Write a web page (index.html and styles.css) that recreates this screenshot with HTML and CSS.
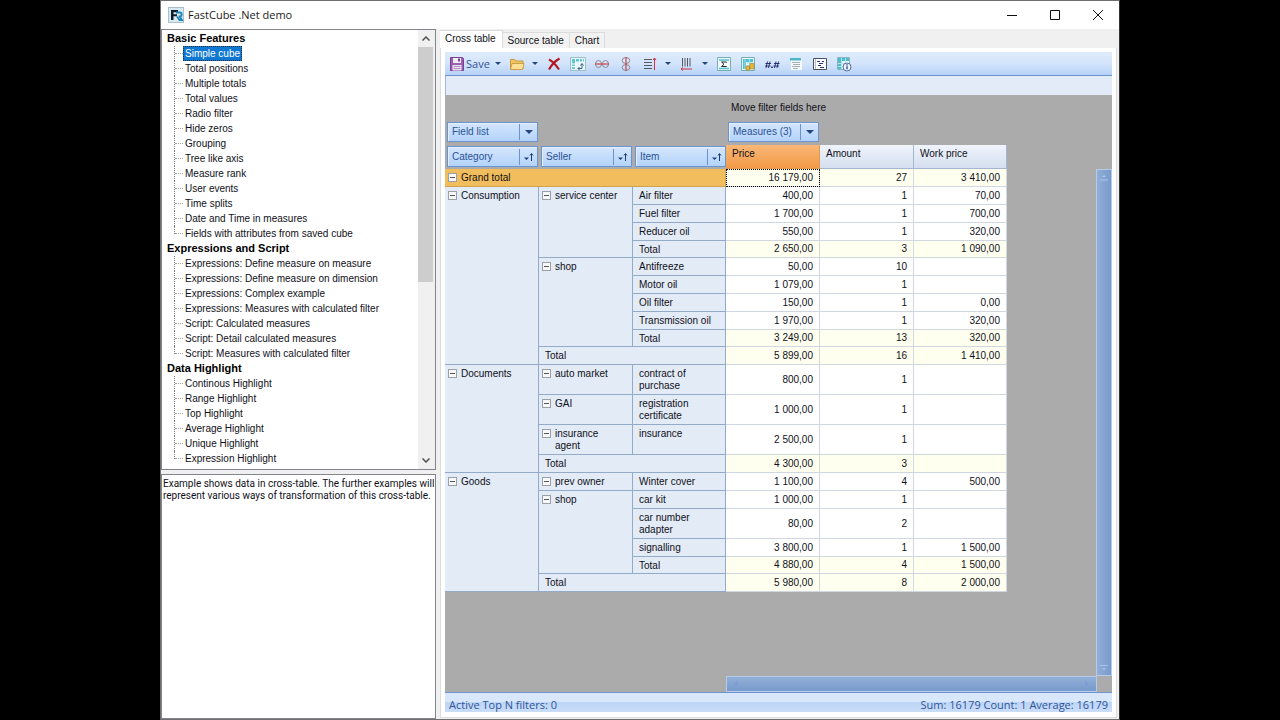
FILE: index.html
```html
<!DOCTYPE html>
<html lang="en">
<head>
<meta charset="utf-8">
<title>FastCube .Net demo</title>
<link rel="stylesheet" href="styles.css">
</head>
<body>
<div class="window">
  <header class="titlebar">
    <svg class="app-icon" viewBox="0 0 16 16"><rect x=".5" y=".5" width="15" height="15" fill="#d9e9f2" stroke="#a9bfcc"/><path d="M3 13V3h7v2.300H5.500v2H9v2H5.500V13z" fill="#101c28"/><path d="M8 5.500h3.500a2 2 0 0 1 .3 4L14 13h-2.500L9 9.500" fill="none" stroke="#1c84b8" stroke-width="1.800"/></svg>
    <h1 class="title">FastCube .Net demo</h1>
    <button class="win-btn" aria-label="Minimize"><svg viewBox="0 0 10 10"><path d="M0 5.500h10"/></svg></button>
    <button class="win-btn" aria-label="Maximize"><svg viewBox="0 0 10 10"><path d="M.5.5h9v9h-9z"/></svg></button>
    <button class="win-btn" aria-label="Close"><svg viewBox="0 0 10 10"><path d="M0 0l10 10M10 0L0 10"/></svg></button>
  </header>
  <div class="content">
    <aside class="side">
      <nav class="tree">
        <ul class="groups">
          <li><span class="group">Basic Features</span>
            <ul class="items">
              <li><a class="selected" href="#">Simple cube</a></li>
              <li><a href="#">Total positions</a></li>
              <li><a href="#">Multiple totals</a></li>
              <li><a href="#">Total values</a></li>
              <li><a href="#">Radio filter</a></li>
              <li><a href="#">Hide zeros</a></li>
              <li><a href="#">Grouping</a></li>
              <li><a href="#">Tree like axis</a></li>
              <li><a href="#">Measure rank</a></li>
              <li><a href="#">User events</a></li>
              <li><a href="#">Time splits</a></li>
              <li><a href="#">Date and Time in measures</a></li>
              <li><a href="#">Fields with attributes from saved cube</a></li>
            </ul>
          </li>
          <li><span class="group">Expressions and Script</span>
            <ul class="items">
              <li><a href="#">Expressions: Define measure on measure</a></li>
              <li><a href="#">Expressions: Define measure on dimension</a></li>
              <li><a href="#">Expressions: Complex example</a></li>
              <li><a href="#">Expressions: Measures with calculated filter</a></li>
              <li><a href="#">Script: Calculated measures</a></li>
              <li><a href="#">Script: Detail calculated measures</a></li>
              <li><a href="#">Script: Measures with calculated filter</a></li>
            </ul>
          </li>
          <li><span class="group">Data Highlight</span>
            <ul class="items">
              <li><a href="#">Continous Highlight</a></li>
              <li><a href="#">Range Highlight</a></li>
              <li><a href="#">Top Highlight</a></li>
              <li><a href="#">Average Highlight</a></li>
              <li><a href="#">Unique Highlight</a></li>
              <li><a href="#">Expression Highlight</a></li>
            </ul>
          </li>
        </ul>
        <div class="scroll">
          <button class="scroll-btn" aria-label="Scroll up"><svg viewBox="0 0 8 5"><path d="M.5 4.500L4 1l3.500 3.500"/></svg></button>
          <div class="scroll-track"><div class="scroll-thumb"></div></div>
          <button class="scroll-btn" aria-label="Scroll down"><svg viewBox="0 0 8 5"><path d="M.5.5L4 4 7.500.5"/></svg></button>
        </div>
      </nav>
      <p class="description">Example shows data in cross-table. The further examples will represent various ways of transformation of this cross-table.</p>
    </aside>
    <main class="main">
      <div class="tabs" role="tablist">
        <button class="tab active" role="tab" aria-selected="true">Cross table</button>
        <button class="tab" role="tab">Source table</button>
        <button class="tab" role="tab">Chart</button>
      </div>
      <section class="page">
        <div class="toolbar">
          <button class="tool save"><svg viewBox="0 0 16 16"><path d="M1.500 1.500h12l1 1v12h-13z" fill="#9a5fb0" stroke="#7a4192"/><path d="M4 2h8v5H4z" fill="#f4eef8"/><path d="M9 2.500h2v3H9z" fill="#7a4192"/><path d="M3.500 9h9v5.500h-9z" fill="#efe6f4"/><path d="M4.500 10.500h7M4.500 12.500h7" stroke="#b48cc4"/></svg>Save</button>
          <button class="drop" aria-label="Save options"></button>
          <button class="tool" aria-label="Open"><svg viewBox="0 0 16 16"><path d="M1.500 13V3.500h4l1.500 1.500h7v8z" fill="#f0c463" stroke="#c89a3c"/><path d="M1.500 13.500l1.500-6h12l-1.500 6z" fill="#ffe096" stroke="#cda047"/></svg></button>
          <button class="drop" aria-label="Open options"></button>
          <button class="tool" aria-label="Clear"><svg viewBox="0 0 16 16"><path d="M3 3.500c4 2 7 5.500 10 10M13.500 2.500C9 5 5.500 9 3 13.500" fill="none" stroke="#b3181f" stroke-width="2.200"/></svg></button>
          <button class="tool" aria-label="Transpose"><svg viewBox="0 0 16 16"><path d="M.5 1.500h15v13H.5z" fill="#eaf7fa" stroke="#9cbfca"/><path d="M2 3h12v2.500H2zM2 5.500h3V13H2z" fill="#5cc8d8"/><path d="M5.500 3v10M9.500 3v3M12.500 3v3M2 8h4M2 10.500h4" stroke="#fff"/><path d="M8 12.500h4V8M10.500 9.500L12 7.500l1.500 2M9.500 11L8 12.500 9.500 14" fill="none" stroke="#37618a"/></svg></button>
          <button class="tool" aria-label="Hide zero columns"><svg viewBox="0 0 16 16"><g fill="none" stroke="#8a8a92"><ellipse cx="4.500" cy="8" rx="3" ry="3.500"/><ellipse cx="11.500" cy="8" rx="3" ry="3.500"/></g><path d="M1 8h14" stroke="#d34b52" stroke-width="1.300"/></svg></button>
          <button class="tool" aria-label="Hide zero rows"><svg viewBox="0 0 16 16"><g fill="none" stroke="#8a8a92"><ellipse cx="8" cy="4.500" rx="3.800" ry="3"/><ellipse cx="8" cy="11.500" rx="3.800" ry="3"/></g><path d="M8 1v14" stroke="#d34b52" stroke-width="1.300"/></svg></button>
          <button class="tool" aria-label="Sort rows"><svg viewBox="0 0 16 16"><path d="M2 3.500h8M2 6.500h8M2 9.500h8M2 12.500h8" stroke="#55595f"/><path d="M12.500 2v12M11 4l1.500-2L14 4" fill="none" stroke="#cf3440"/></svg></button>
          <button class="drop" aria-label="Row sort options"></button>
          <button class="tool" aria-label="Sort columns"><svg viewBox="0 0 16 16"><path d="M3.500 2v8.500M6 2v8.500M8.500 2v8.500M11 2v8.500" stroke="#55595f"/><path d="M2 13h11M4 11.500L2 13l2 1.500" fill="none" stroke="#cf3440"/></svg></button>
          <button class="drop" aria-label="Column sort options"></button>
          <button class="tool" aria-label="Totals"><svg viewBox="0 0 16 16"><path d="M1.500 1.500h13v13h-13z" fill="#eef8f6" stroke="#78aeb6"/><path d="M3 4h10M3 12.500h10" stroke="#52c4d2" stroke-width="1.500"/><path d="M4.500 5.500h7v5.500h-7z" fill="#fff"/><path d="M10.500 6.500V6h-5l2.500 2.300-2.500 2.200h5V10" fill="none" stroke="#22262c"/></svg></button>
          <button class="tool" aria-label="Highlight"><svg viewBox="0 0 16 16"><path d="M1.500 1.500h13v13h-13z" fill="#e9f9fa" stroke="#78aeb6"/><path d="M3 3h10v3H3zM3 6h3v7H3z" fill="#4dc4d6"/><path d="M7 7h6M7 9.500h6M9.500 3v10M5 3v10" stroke="#a8dce2"/><path d="M6 10h3.500v4H6zM10 7.500h4V13h-4z" fill="#e4b83c" stroke="#a8822a" stroke-width=".6"/></svg></button>
          <button class="tool" aria-label="Number format"><svg viewBox="0 0 16 16"><path d="M3.500 5.500L2 12M6 5.500L4.500 12M1.500 7.500h5.500M1 10h5.500M12 5.500L10.500 12M14.500 5.500L13 12M10 7.500h5.500M9.500 10H15" stroke="#1b2466" fill="none" stroke-width=".9"/><path d="M7.200 10.500h1.600V12H7.200z" fill="#1b2466"/></svg></button>
          <button class="tool" aria-label="Captions"><svg viewBox="0 0 16 16"><path d="M3 3h11v11H3z" fill="#f6fafc"/><path d="M2 2h11v2.500H2z" fill="#4fb6c4"/><path d="M4 6.500h8M5 8.500h7M4 10.500h8M5 12.500h5" stroke="#a5adb3"/></svg></button>
          <button class="tool" aria-label="Properties"><svg viewBox="0 0 16 16"><path d="M1.500 2.500h13v11h-13z" fill="#fbfcff" stroke="#4c525c"/><path d="M3.500 3v10" stroke="#b5bcc6"/><path d="M5 5.500h3M7 7.500h4M10 5.500h2M6 9.500h3M8 11.500h4" stroke="#27347e"/></svg></button>
          <button class="tool" aria-label="Cube information"><svg viewBox="0 0 16 16"><path d="M1.500 1.500h12v12h-12z" fill="#eefafc" stroke="#8ab4c0"/><path d="M2 2h11v3H2zM2 5h3v8H2z" fill="#4fbccc"/><path d="M5.500 2v11M9.500 2v5M2 7.500h9M2 10.500h5" stroke="#b4e2e8"/><circle cx="11" cy="11" r="4" fill="#eef2fc" stroke="#5670a8"/><path d="M11 8.300v1.200M11 10.200v3" stroke="#24408a" stroke-width="1.300"/></svg></button>
        </div>
        <div class="strip"></div>
        <div class="cube">
          <p class="filter-area">Move filter fields here</p>
          <div class="field-row">
            <button class="field">Field list<span class="field-mark"><i class="arrow"></i></span></button>
            <button class="field measures">Measures (3)<span class="field-mark"><i class="arrow"></i></span></button>
          </div>
          <div class="cube-body">
            <table class="cross">
              <colgroup><col class="col-a"><col class="col-a"><col class="col-b"><col class="col-a"><col class="col-a"><col class="col-b"></colgroup>
              <thead>
                <tr>
                  <th class="axis"><button class="field">Category<span class="field-mark"><svg viewBox="0 0 10 10"><path d="M0 5.500h5L2.500 8z"/><path class="up" d="M7.500 9V2M6 3.500L7.500 1.500 9 3.500"/></svg></span></button></th>
                  <th class="axis"><button class="field">Seller<span class="field-mark"><svg viewBox="0 0 10 10"><path d="M0 5.500h5L2.500 8z"/><path class="up" d="M7.500 9V2M6 3.500L7.500 1.500 9 3.500"/></svg></span></button></th>
                  <th class="axis"><button class="field">Item<span class="field-mark"><svg viewBox="0 0 10 10"><path d="M0 5.500h5L2.500 8z"/><path class="up" d="M7.500 9V2M6 3.500L7.500 1.500 9 3.500"/></svg></span></button></th>
                  <th class="measure current">Price</th><th class="measure">Amount</th><th class="measure">Work price</th>
                </tr>
              </thead>
              <tbody>
                <tr class="sum"><th class="grand" colspan="3"><div class="node"><button class="minus" aria-label="Collapse"></button>Grand total</div></th><td class="focus">16 179,00</td><td>27</td><td>3 410,00</td></tr>
                <tr><th rowspan="10"><div class="node"><button class="minus" aria-label="Collapse"></button>Consumption</div></th><th rowspan="4"><div class="node"><button class="minus" aria-label="Collapse"></button>service center</div></th><th>Air filter</th><td>400,00</td><td>1</td><td>70,00</td></tr>
                <tr><th>Fuel filter</th><td>1 700,00</td><td>1</td><td>700,00</td></tr>
                <tr><th>Reducer oil</th><td>550,00</td><td>1</td><td>320,00</td></tr>
                <tr class="sum inner"><th>Total</th><td>2 650,00</td><td>3</td><td>1 090,00</td></tr>
                <tr><th rowspan="5"><div class="node"><button class="minus" aria-label="Collapse"></button>shop</div></th><th>Antifreeze</th><td>50,00</td><td>10</td><td></td></tr>
                <tr><th>Motor oil</th><td>1 079,00</td><td>1</td><td></td></tr>
                <tr><th>Oil filter</th><td>150,00</td><td>1</td><td>0,00</td></tr>
                <tr><th>Transmission oil</th><td>1 970,00</td><td>1</td><td>320,00</td></tr>
                <tr class="sum inner"><th>Total</th><td>3 249,00</td><td>13</td><td>320,00</td></tr>
                <tr class="sum"><th colspan="2">Total</th><td>5 899,00</td><td>16</td><td>1 410,00</td></tr>
                <tr class="tall"><th rowspan="4"><div class="node"><button class="minus" aria-label="Collapse"></button>Documents</div></th><th><div class="node"><button class="minus" aria-label="Collapse"></button>auto market</div></th><th>contract of purchase</th><td>800,00</td><td>1</td><td></td></tr>
                <tr class="tall"><th><div class="node"><button class="minus" aria-label="Collapse"></button>GAI</div></th><th>registration certificate</th><td>1 000,00</td><td>1</td><td></td></tr>
                <tr class="tall"><th><div class="node"><button class="minus" aria-label="Collapse"></button>insurance agent</div></th><th>insurance</th><td>2 500,00</td><td>1</td><td></td></tr>
                <tr class="sum"><th colspan="2">Total</th><td>4 300,00</td><td>3</td><td></td></tr>
                <tr><th rowspan="6"><div class="node"><button class="minus" aria-label="Collapse"></button>Goods</div></th><th><div class="node"><button class="minus" aria-label="Collapse"></button>prev owner</div></th><th>Winter cover</th><td>1 100,00</td><td>4</td><td>500,00</td></tr>
                <tr><th rowspan="4"><div class="node"><button class="minus" aria-label="Collapse"></button>shop</div></th><th>car kit</th><td>1 000,00</td><td>1</td><td></td></tr>
                <tr class="tall"><th>car number adapter</th><td>80,00</td><td>2</td><td></td></tr>
                <tr><th>signalling</th><td>3 800,00</td><td>1</td><td>1 500,00</td></tr>
                <tr class="sum inner"><th>Total</th><td>4 880,00</td><td>4</td><td>1 500,00</td></tr>
                <tr class="sum"><th colspan="2">Total</th><td>5 980,00</td><td>8</td><td>2 000,00</td></tr>
              </tbody>
            </table>
            <div class="vbar"><svg viewBox="0 0 8 8"><path d="M2 4l2-2 2 2zM0 6.500h8v1H0z"/></svg><svg viewBox="0 0 8 8"><path d="M0 1h8v1H0zM2 4h4L4 6z"/></svg></div>
          </div>
          <div class="hbar"><svg viewBox="0 0 8 8"><path d="M6 0v8L2 4z"/></svg><svg viewBox="0 0 8 8"><path d="M2 0v8l4-4z"/></svg></div>
        </div>
        <footer class="status"><span>Active Top N filters: 0</span><span>Sum: 16179 Count: 1 Average: 16179</span></footer>
      </section>
    </main>
  </div>
</div>
</body>
</html>
```

FILE: styles.css
```css
* { box-sizing: border-box; }

body {
  margin: 0;
  background: #000;
  color: #101018;
  font: 10px/12px "Liberation Sans", Arial, sans-serif;
}

h1, p, ul { margin: 0; padding: 0; font-weight: normal; }
ul { list-style: none; }

button {
  margin: 0;
  padding: 0;
  border: 0;
  background: none;
  color: inherit;
  font: inherit;
}

.window {
  display: flex;
  flex-direction: column;
  height: 100vh;
  margin: 0 160px;
  border: 1px solid #6e6e70;
  border-right-color: #333;
  background: #f0f0f0;
}

.titlebar {
  display: flex;
  align-items: center;
  height: 28px;
  padding-left: 7px;
  background: #fff;
}

.app-icon { width: 16px; height: 16px; }

.title {
  flex: 1;
  margin-left: 4px;
  color: #1a1a1a;
  font: 11px/16px "Open Sans", "Noto Sans", sans-serif;
}

.win-btn {
  display: flex;
  align-items: center;
  justify-content: center;
  width: 43px;
  height: 28px;
}

.win-btn svg { width: 10px; height: 10px; fill: none; stroke: #111; }

.content { display: flex; flex: 1; min-height: 0; }

/* Left column */
.side {
  display: flex;
  flex-direction: column;
  gap: 4px;
  width: 275px;
}

.tree {
  display: flex;
  height: 441px;
  border: 1px solid #82858c;
  background: #fff;
}

.groups { flex: 1; padding-top: 1px; line-height: 15px; white-space: nowrap; }

.group { display: block; padding-left: 5px; color: #000; font-size: 11px; font-weight: bold; }

.items li { position: relative; height: 15px; padding-left: 21px; }

.items li::before {
  content: "";
  position: absolute;
  top: 0;
  bottom: 0;
  left: 12px;
  border-left: 1px dotted #808080;
}

.items li:last-child::before { bottom: 7px; }

.items li::after {
  content: "";
  position: absolute;
  top: 7px;
  left: 13px;
  width: 8px;
  border-top: 1px dotted #a0a0a0;
}

.items a {
  display: inline-block;
  padding: 0 2px;
  color: #101018;
  text-decoration: none;
  vertical-align: top;
}

.items .selected {
  background: #0f78d2;
  color: #fff;
  outline: 1px dotted #20303c;
  outline-offset: -1px;
}

.scroll { display: flex; flex-direction: column; width: 17px; padding-right: 2px; background: #f0f0f0; }

.scroll-btn { display: flex; align-items: center; justify-content: center; height: 17px; }

.scroll-btn svg { width: 8px; height: 5px; fill: none; stroke: #505050; stroke-width: 1.500; }

.scroll-track { flex: 1; }

.scroll-thumb { height: 58%; background: #cdcdcd; }

.description {
  flex: 1;
  padding: 3px 0 3px 1px;
  border: 1px solid #82858c;
  background: #fff;
  font-family: Roboto, "Liberation Sans", sans-serif;
}

/* Right column */
.main { display: flex; flex: 1; flex-direction: column; min-width: 0; padding: 1px 2px 1px 4px; }

.tabs { display: flex; align-items: flex-end; height: 18px; }

.tab {
  height: 16px;
  padding: 0 5px;
  border: 1px solid #dcdcdc;
  border-width: 1px 1px 0 0;
  background: #f2f2f2;
}

.tab.active { height: 18px; padding: 0 6px 2px 5px; background: #fff; }

.page {
  display: flex;
  flex: 1;
  flex-direction: column;
  padding: 4px 4px 5px;
  border: 1px solid #dcdcdc;
  border-top: 0;
  background: #fff;
}

.toolbar {
  display: flex;
  align-items: center;
  height: 24px;
  border-bottom: 1px solid #6f94cb;
  background: linear-gradient(#dfebfb, #d3e4fb 50%, #b6d2f8);
}

.tool {
  display: flex;
  align-items: center;
  justify-content: center;
  width: 24px;
  height: 22px;
}

.tool svg { flex: none; width: 16px; height: 16px; }

.tool.save {
  width: auto;
  padding: 0 2px 0 4px;
  gap: 1px;
  color: #30549a;
  font: 11px/16px "Open Sans", "Noto Sans", sans-serif;
}

.drop { display: flex; align-items: center; justify-content: center; width: 13px; height: 22px; }

.drop::before, .arrow {
  content: "";
  border: 3px solid transparent;
  border-top-color: #22467e;
  border-bottom: 0;
}

.strip { height: 19px; border-left: 1px solid #9fb7dc; background: #e3ebf8; }

.cube { display: flex; flex: 1; flex-direction: column; min-height: 0; background: #ababab; }

.filter-area { padding: 7px 0 8px 286px; }

.field-row { display: flex; padding: 0 2px 3px; }

.field {
  display: flex;
  align-items: center;
  width: 91px;
  height: 20px;
  padding-left: 4px;
  border: 1px solid #6c93cc;
  background: linear-gradient(#d5e6fd, #b3d3fb);
  box-shadow: inset 1px 1px #e4effe;
  color: #2a5296;
  text-align: left;
  white-space: nowrap;
}

.measures { margin-left: 190px; }

.field-mark {
  display: flex;
  align-items: center;
  justify-content: center;
  width: 18px;
  height: 16px;
  margin-left: auto;
  border-left: 1px solid #6c93cc;
}

.arrow { border-width: 4px 4px 0; }

.field-mark svg { width: 10px; height: 10px; fill: #1c3f7a; }
.field-mark .up { fill: none; stroke: #1c3f7a; }

.cube-body { display: flex; flex: 1; justify-content: space-between; min-height: 0; }

.cross { width: 562px; height: 0; border-spacing: 0; table-layout: fixed; }

.col-a { width: 94px; }
.col-b { width: 93px; }

.cross th, .cross td { padding: 0 6px; border: 1px solid; border-width: 0 1px 1px 0; }

.cross th {
  padding-top: 3px;
  border-color: #93abc8;
  background: #e3ebf7;
  font-weight: normal;
  text-align: left;
  vertical-align: top;
}

.cross td { border-color: #d0d7e0; background: #fff; text-align: right; }
.cross .sum td { background: #fffff0; }

.cross tr { height: 18px; }
.cross .inner { height: 17px; }
.cross .tall { height: 30px; }
.cross thead tr { height: 24px; }

.cross .axis { padding: 1px 0 0 2px; border: 0; background: #ababab; }
.axis .field { height: 21px; }

.cross .measure { border-color: #a5b6cf; background: linear-gradient(#f0f4fb, #d5dff0); }
.cross .current { border-color: #e09a50; background: linear-gradient(#f9b877, #f29a48); }

.cross .grand { border-color: #cfa254; background: #f2bd5c; }
.cross .focus { outline: 1px dotted #000; outline-offset: -1px; }

.node { display: flex; gap: 4px; margin-left: -3px; }

.minus {
  position: relative;
  flex: none;
  width: 9px;
  height: 9px;
  margin-top: 1px;
  border: 1px solid #9a9fa8;
  background: #f8f8f8;
}

.minus::before { content: ""; position: absolute; top: 3px; left: 1px; width: 5px; height: 1px; background: #55585e; }

.vbar, .hbar {
  display: flex;
  justify-content: space-between;
  align-items: center;
  border: 1px solid #b4cbea;
}

.vbar {
  flex-direction: column;
  width: 16px;
  margin-top: 24px;
  padding: 3px 0;
  background: linear-gradient(90deg, #91afd7, #789bcb);
}

.hbar {
  height: 16px;
  margin: 0 15px 0 281px;
  padding: 0 5px;
  background: linear-gradient(#91afd7, #789bcb);
}

.vbar svg, .hbar svg { width: 8px; height: 8px; fill: #7f9cd6; }
.vbar svg { fill: #a9c6ee; }

.status {
  display: flex;
  justify-content: space-between;
  height: 20px;
  padding: 0 4px;
  border-top: 1px solid #6f94cb;
  background: linear-gradient(#d9e7fa 0 45%, #bcd5f6 45%, #c9ddf8);
  color: #30549a;
  font: 11px/24px "Open Sans", "Noto Sans", sans-serif;
}
```
